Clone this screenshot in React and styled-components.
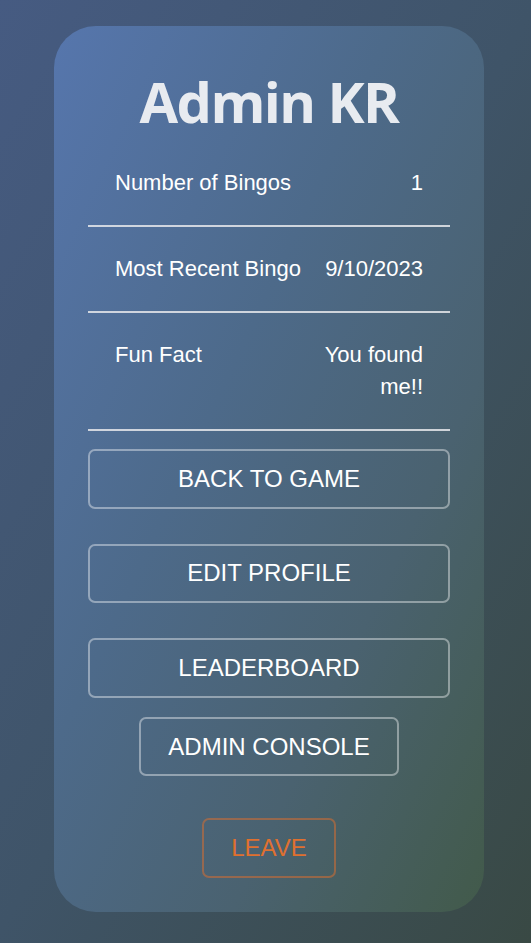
import React from "react";
import styled, { createGlobalStyle } from "styled-components";

const GlobalStyle = createGlobalStyle`
  html, body {
    margin: 0;
    padding: 0;
  }
  body {
    font-family: "Liberation Sans", Arial, sans-serif;
    background: linear-gradient(120deg, #465b82 0%, #3f5468 50%, #394944 100%);
    min-height: 943px;
  }
`;

const Page = styled.div`
  box-sizing: border-box;
  min-height: 943px;
  padding: 26px 47px 31px 54px;
`;

const Card = styled.div`
  box-sizing: border-box;
  width: 430px;
  height: 886px;
  border-radius: 42px;
  padding: 42px 34px 34px;
  background: linear-gradient(115deg, #5676ad 0%, #4d6a8a 40%, #4a6270 70%, #425a4a 100%);
  display: flex;
  flex-direction: column;
  align-items: center;
`;

const Title = styled.h1`
  margin: 0 0 6px;
  font-family: "Open Sans", "Noto Sans", sans-serif;
  font-weight: 700;
  font-size: 56px;
  line-height: 67px;
  color: #e8ebf0;
  letter-spacing: -1.6px;
`;

const Stats = styled.div`
  width: 100%;
  display: flex;
  flex-direction: column;
`;

const Row = styled.div`
  display: grid;
  grid-template-columns: 1fr 100px;
  column-gap: 16px;
  padding: 26px 27px 26px;
  border-bottom: 2px solid rgba(230, 232, 235, 0.85);
  font-size: 22px;
  line-height: 32px;
  color: #ffffff;
`;

const Label = styled.span`
  white-space: nowrap;
`;

const Value = styled.span`
  text-align: right;
`;

const Button = styled.button`
  box-sizing: border-box;
  height: 60px;
  width: ${(p) => (p.full ? "100%" : "auto")};
  padding: 0 27px;
  margin-top: ${(p) => p.gap}px;
  background: transparent;
  border: 2px solid ${(p) => (p.danger ? "rgba(214, 110, 50, 0.55)" : "rgba(255, 255, 255, 0.4)")};
  border-radius: 7px;
  color: ${(p) => (p.danger ? "#e0702f" : "#ffffff")};
  font-family: "Liberation Sans", Arial, sans-serif;
  font-size: 24px;
  text-transform: uppercase;
  cursor: pointer;
`;

const stats = [
  { label: "Number of Bingos", value: "1" },
  { label: "Most Recent Bingo", value: "9/10/2023" },
  { label: "Fun Fact", value: "You found me!!" },
];

export default function App() {
  return (
    <>
      <GlobalStyle />
      <Page>
        <Card>
          <Title>Admin KR</Title>
          <Stats>
            {stats.map((s) => (
              <Row key={s.label}>
                <Label>{s.label}</Label>
                <Value>{s.value}</Value>
              </Row>
            ))}
          </Stats>
          <Button full gap={18}>Back to Game</Button>
          <Button full gap={35}>Edit Profile</Button>
          <Button full gap={35}>Leaderboard</Button>
          <Button gap={19}>Admin Console</Button>
          <Button danger gap={42}>Leave</Button>
        </Card>
      </Page>
    </>
  );
}
